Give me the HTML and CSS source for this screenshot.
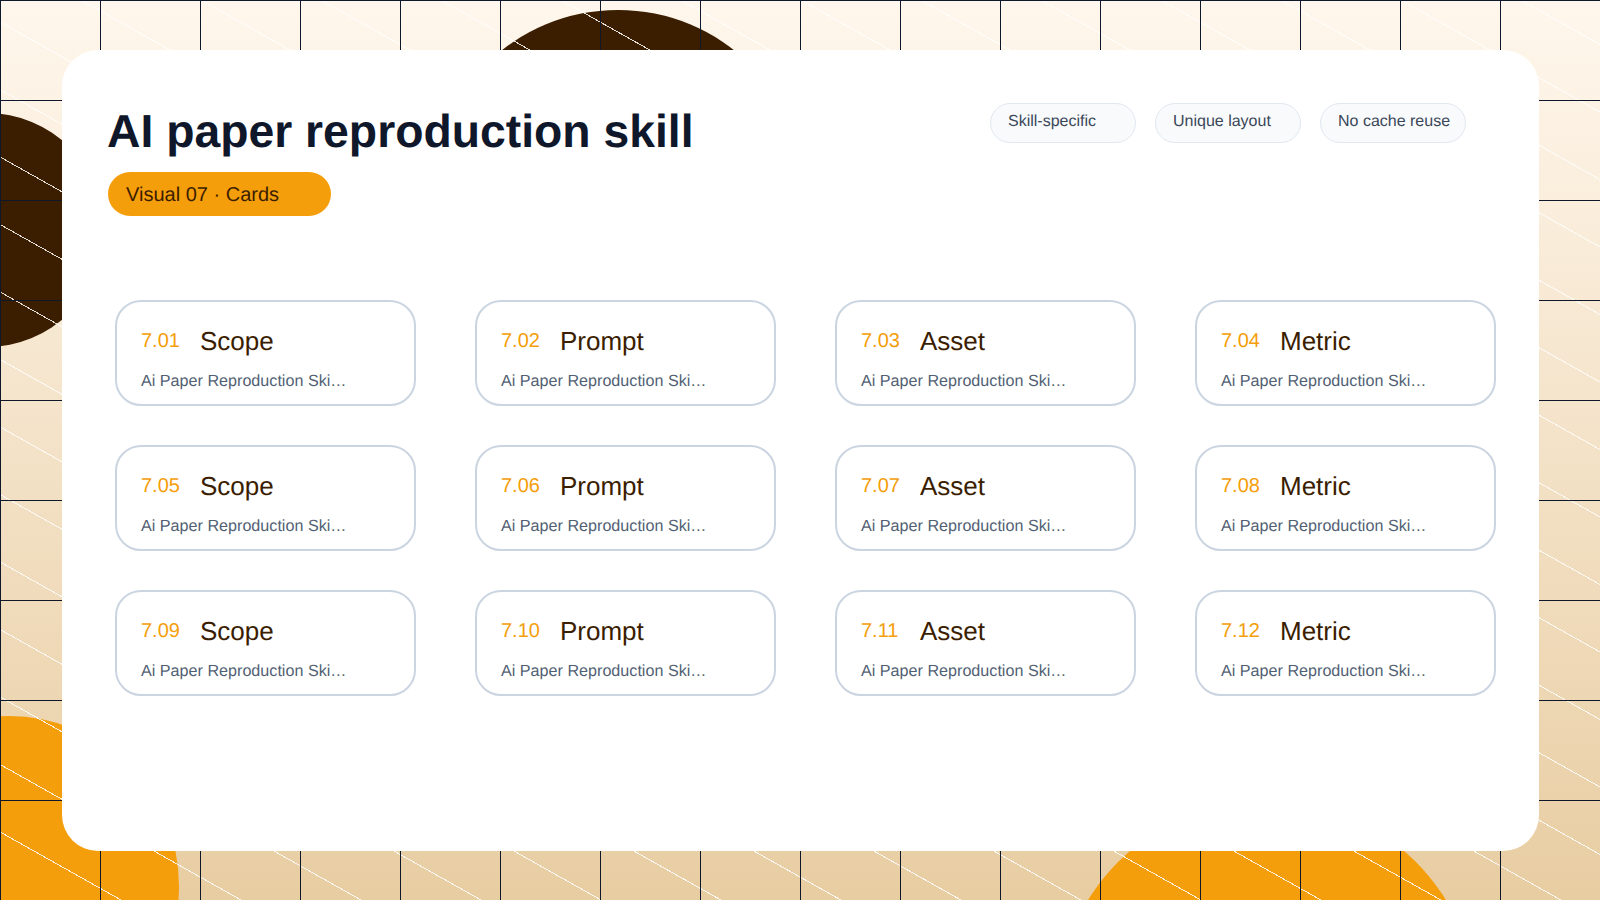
FILE: index.html
```html
<!DOCTYPE html>
<html lang="en">
<head>
<meta charset="utf-8">
<title>AI paper reproduction skill</title>
<link rel="stylesheet" href="styles.css">
</head>
<body>
<div class="stage">
  <div class="blob blob-top"></div>
  <div class="blob blob-left"></div>
  <div class="blob blob-bl"></div>
  <div class="blob blob-br"></div>
  <div class="overlay"></div>
  <main class="panel">
    <header class="head">
      <div class="head-main">
        <h1 class="title">AI paper reproduction skill</h1>
        <div class="pill">Visual 07 · Cards</div>
      </div>
      <div class="chips">
        <span class="chip">Skill-specific</span>
        <span class="chip">Unique layout</span>
        <span class="chip">No cache reuse</span>
      </div>
    </header>
    <section class="cards">
      <article class="card"><div class="card-top"><span class="num">7.01</span><span class="name">Scope</span></div><p class="sub">Ai Paper Reproduction Ski…</p></article>
      <article class="card"><div class="card-top"><span class="num">7.02</span><span class="name">Prompt</span></div><p class="sub">Ai Paper Reproduction Ski…</p></article>
      <article class="card"><div class="card-top"><span class="num">7.03</span><span class="name">Asset</span></div><p class="sub">Ai Paper Reproduction Ski…</p></article>
      <article class="card"><div class="card-top"><span class="num">7.04</span><span class="name">Metric</span></div><p class="sub">Ai Paper Reproduction Ski…</p></article>
      <article class="card"><div class="card-top"><span class="num">7.05</span><span class="name">Scope</span></div><p class="sub">Ai Paper Reproduction Ski…</p></article>
      <article class="card"><div class="card-top"><span class="num">7.06</span><span class="name">Prompt</span></div><p class="sub">Ai Paper Reproduction Ski…</p></article>
      <article class="card"><div class="card-top"><span class="num">7.07</span><span class="name">Asset</span></div><p class="sub">Ai Paper Reproduction Ski…</p></article>
      <article class="card"><div class="card-top"><span class="num">7.08</span><span class="name">Metric</span></div><p class="sub">Ai Paper Reproduction Ski…</p></article>
      <article class="card"><div class="card-top"><span class="num">7.09</span><span class="name">Scope</span></div><p class="sub">Ai Paper Reproduction Ski…</p></article>
      <article class="card"><div class="card-top"><span class="num">7.10</span><span class="name">Prompt</span></div><p class="sub">Ai Paper Reproduction Ski…</p></article>
      <article class="card"><div class="card-top"><span class="num">7.11</span><span class="name">Asset</span></div><p class="sub">Ai Paper Reproduction Ski…</p></article>
      <article class="card"><div class="card-top"><span class="num">7.12</span><span class="name">Metric</span></div><p class="sub">Ai Paper Reproduction Ski…</p></article>
    </section>
  </main>
</div>
</body>
</html>
```
FILE: styles.css
```css
* { box-sizing: border-box; }
html, body { margin: 0; padding: 0; }
body {
  font-family: "Liberation Sans", Arial, sans-serif;
  text-rendering: geometricPrecision;
}

.stage {
  position: relative;
  width: 1600px;
  height: 900px;
  overflow: hidden;
  padding: 50px 61px 49px 62px;
  background: linear-gradient(180deg, #fff7ed 0%, #e8cda2 100%);
}

.blob { position: absolute; border-radius: 50%; }
.blob-top { left: 430px; top: 10px; width: 376px; height: 376px; background: #3b1d00; }
.blob-left { left: -130px; top: 113px; width: 234px; height: 234px; background: #3b1d00; }
.blob-bl { left: -161px; top: 716px; width: 340px; height: 340px; background: #f59e0b; }
.blob-br { left: 1057px; top: 800px; width: 420px; height: 420px; background: #f59e0b; }

.overlay {
  position: absolute;
  inset: 0;
  background-image:
    linear-gradient(90deg, #0f172a 1px, transparent 1px),
    linear-gradient(180deg, #0f172a 1px, transparent 1px),
    repeating-linear-gradient(29.36deg, rgba(255,255,255,.85) 0, rgba(255,255,255,.85) 1px, transparent 1px, transparent 58.83px);
  background-size: 100px 100px, 100px 100px, auto;
}

.panel {
  position: relative;
  height: 801px;
  background: #ffffff;
  border-radius: 36px;
  padding: 53px 42px 0 46px;
}

.head {
  display: flex;
  justify-content: space-between;
  align-items: flex-start;
  padding-right: 31px;
}

.title {
  margin: 1px 0 0 -1px;
  font-size: 46.3px;
  line-height: 54px;
  font-weight: 700;
  color: #0f172a;
}

.pill {
  width: 223px;
  height: 44px;
  margin-top: 14px;
  padding: 0 18px;
  border-radius: 22px;
  background: #f59e0b;
  color: #3b1d00;
  font-size: 20px;
  line-height: 46px;
}

.chips { display: flex; gap: 19px; }

.chip {
  width: 146px;
  height: 40px;
  padding: 0 17px;
  border: 1px solid #e2e8f0;
  border-radius: 20px;
  background: #f8fafc;
  color: #3b4759;
  font-size: 16px;
  line-height: 36px;
  white-space: nowrap;
}

.cards {
  display: grid;
  grid-template-columns: repeat(4, 301px);
  grid-auto-rows: 106px;
  column-gap: 59px;
  row-gap: 39px;
  margin: 84px 0 0 7px;
}

.card {
  border: 2px solid #cbd5e1;
  border-radius: 26px;
  padding: 0 24px;
  background: #ffffff;
}

.card-top {
  display: flex;
  align-items: center;
  gap: 20px;
  margin-top: 22px;
  height: 34px;
}

.num { min-width: 39px; color: #f59e0b; font-size: 20px; line-height: 34px; }
.name { color: #3b1d00; font-size: 26px; line-height: 34px; }

.sub {
  margin: 12px 0 0;
  color: #525f73;
  font-size: 16.15px;
  line-height: 22px;
}
```
